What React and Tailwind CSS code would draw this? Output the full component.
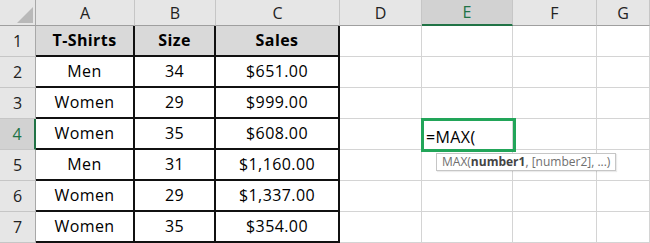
import React from "react";

const cols = ["A", "B", "C", "D", "E", "F", "G"];

const rows = [
  ["T-Shirts", "Size", "Sales"],
  ["Men", "34", "$651.00"],
  ["Women", "29", "$999.00"],
  ["Women", "35", "$608.00"],
  ["Men", "31", "$1,160.00"],
  ["Women", "29", "$1,337.00"],
  ["Women", "35", "$354.00"],
];

// grid lines: table cells get black right/bottom borders, the rest gray
const tableCell = "border-r-2 border-b-2 border-r-[#111] border-b-[#111] flex items-end justify-center pb-[3px] tracking-[0.4px]";
const plainCell = "border-r border-b border-[#d4d4d4]";

function ColHeader({ label }) {
  const selected = label === "E";
  return (
    <div
      className={
        selected
          ? "flex items-center justify-center border-r border-r-[#c6c6c6] border-b-2 border-b-[#217346] bg-[#d2d2d2] text-[#217346] text-[16px]"
          : "flex items-center justify-center border-r border-r-[#c6c6c6] border-b border-b-[#9f9f9f] bg-[#e6e6e6] text-[#222] text-[16px]"
      }
    >
      {label}
    </div>
  );
}

function RowHeader({ n }) {
  const selected = n === 4;
  return (
    <div
      className={
        selected
          ? "flex items-end justify-center pb-[3px] border-b border-b-[#c6c6c6] border-r-2 border-r-[#217346] bg-[#d2d2d2] text-[#217346] text-[16px]"
          : "flex items-end justify-center pb-[3px] border-b border-b-[#c6c6c6] border-r border-r-[#a8a8a8] bg-[#e6e6e6] text-[#222] text-[16px]"
      }
    >
      {n}
    </div>
  );
}

export default function App() {
  return (
    <div className="w-[650px] h-[243px] overflow-hidden bg-white font-[Open_Sans,sans-serif] text-black">
      <div className="grid grid-cols-[36px_99px_81px_124px_82px_91px_84px_53px] grid-rows-[26px_repeat(7,31px)]">
        {/* corner */}
        <div className="relative border-r border-r-[#a8a8a8] border-b border-b-[#9f9f9f] bg-[#e6e6e6]">
          <svg className="absolute left-[17px] top-[7px]" width="16" height="16" viewBox="0 0 16 16">
            <polygon points="16,0 16,16 0,16" fill="#b9b9b9" />
          </svg>
        </div>
        {cols.map((c) => (
          <ColHeader key={c} label={c} />
        ))}

        {rows.map((r, i) => (
          <React.Fragment key={i}>
            <RowHeader n={i + 1} />
            {r.map((v, j) => (
              <div
                key={j}
                className={
                  i === 0
                    ? tableCell + " bg-[#d9d9d9] font-bold text-[16px]"
                    : tableCell + " text-[16px]"
                }
              >
                {v}
              </div>
            ))}
            <div className={plainCell} />
            {i === 3 ? (
              <div className="relative border-r border-b border-[#d4d4d4]">
                <div className="absolute -left-[1px] -top-[1px] w-[95px] h-[34px] border-[3px] border-[#22a559] flex items-end pl-[2px] pb-[3px] text-[16px] leading-none tracking-[0.4px]">
                  <span className="pb-[1px]">=MAX(</span>
                </div>
                <div className="absolute left-[14px] top-[34px] z-10 h-[18px] px-[5px] flex items-center bg-white border border-[#c6c6c6] text-[12px] text-[#6f6f6f] whitespace-nowrap shadow-[1px_1px_1px_rgba(0,0,0,0.08)]">
                  MAX(<span className="font-bold text-[#444]">number1</span>, [number2], ...)
                </div>
              </div>
            ) : (
              <div className={plainCell} />
            )}
            <div className={plainCell} />
            <div className={plainCell} />
          </React.Fragment>
        ))}
      </div>
    </div>
  );
}
